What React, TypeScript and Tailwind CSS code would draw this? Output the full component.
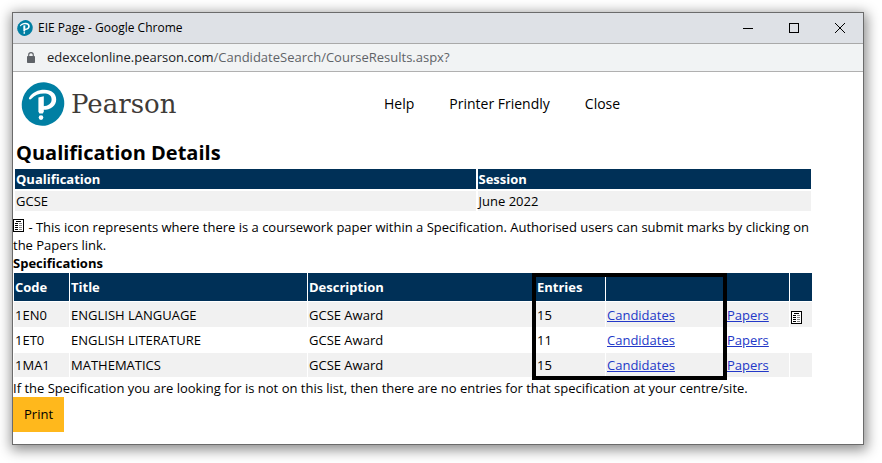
const specifications = [
  { code: '1EN0', title: 'ENGLISH LANGUAGE', description: 'GCSE Award', entries: 15, coursework: true },
  { code: '1ET0', title: 'ENGLISH LITERATURE', description: 'GCSE Award', entries: 11, coursework: false },
  { code: '1MA1', title: 'MATHEMATICS', description: 'GCSE Award', entries: 15, coursework: false }
]

const navLinks = ['Help', 'Printer Friendly', 'Close']

function PearsonMark({ className }: { className: string }) {
  return (
    <svg viewBox="0 0 44 44" className={className} aria-hidden="true">
      <ellipse cx="22" cy="22" rx="21" ry="22" transform="rotate(30 22 22)" fill="#007fa3" />
      <path
        d="M8.2 15.4C11.6 10.4 17 7.8 23.4 7.8C30.6 7.8 35.2 11.6 35.2 17.4C35.2 23.8 30 27.8 22 27.8V24.2C27.4 24 30.6 21.4 30.6 17.4C30.6 13.6 27.6 11.6 22.8 11.6C17.8 11.6 13.6 13.4 10.4 16.8C9 18.2 7.2 17 8.2 15.4Z"
        fill="#fff"
      />
      <path d="M17.4 15.4L22.8 14.2V29.6L21.8 31.6H18.4L17.4 29.6Z" fill="#fff" />
      <circle cx="20" cy="35.6" r="2.3" fill="#fff" />
    </svg>
  )
}

function CourseworkIcon({ className }: { className: string }) {
  return (
    <svg viewBox="0 0 11 13" className={`inline-block h-[13px] w-[11px] ${className}`} shapeRendering="crispEdges" aria-hidden="true">
      <rect x="0.5" y="0.5" width="10" height="12" fill="#fff" stroke="#000" />
      <path d="M3 2.5H8M2 4.5H5M2 6.5H5M2 8.5H5M2 10.5H5" stroke="#000" />
      <path d="M6 4.5H9M6 6.5H9M6 8.5H9M6 10.5H9" stroke="#888" />
    </svg>
  )
}

const windowControls = [
  { label: 'Minimise', path: 'M0 5.5H10', crisp: true },
  { label: 'Maximise', path: 'M0.5 0.5H9.5V9.5H0.5Z', crisp: true },
  { label: 'Close window', path: 'M0 0L10 10M10 0L0 10', crisp: false }
]

function TitleBar() {
  return (
    <div className="flex h-[31px] items-center border-b border-[#a9a9a9] bg-[#dee1e6] pl-1">
      <PearsonMark className="h-4 w-4" />
      <span className="ml-[5px] flex-1 text-xs">EIE Page - Google Chrome</span>
      <div className="flex">
        {windowControls.map((control) => (
          <button key={control.label} type="button" aria-label={control.label} className="flex h-[30px] w-[46px] items-center justify-center">
            <svg viewBox="0 0 10 10" className="h-2.5 w-2.5" shapeRendering={control.crisp ? 'crispEdges' : 'auto'}>
              <path d={control.path} fill="none" stroke="#000" />
            </svg>
          </button>
        ))}
      </div>
    </div>
  )
}

function AddressBar() {
  return (
    <div className="flex h-[28px] items-center border-b border-[#b0b0b0] bg-[#f1f3f4] pl-3.5">
      <svg viewBox="0 0 8 11" className="h-[11px] w-2" aria-hidden="true">
        <path d="M1.7 5V2.9a2.3 2.3 0 0 1 4.6 0V5" fill="none" stroke="#5f6368" strokeWidth="1.1" />
        <rect y="4" width="8" height="7" rx="0.8" fill="#5f6368" />
      </svg>
      <span className="ml-3 text-[13px] text-[#5f6368]">
        <span className="text-[#202124]">edexcelonline.pearson.com</span>/CandidateSearch/CourseResults.aspx?
      </span>
    </div>
  )
}

export default function App() {
  return (
    <div className="bg-white pt-3 pr-[18px] pb-[18px] pl-3 font-['Open_Sans',sans-serif] text-black">
      <div className="border border-[#6b6b6b] bg-white shadow-[1px_3px_12px_2px_rgba(0,0,0,0.45)]">
        <TitleBar />
        <AddressBar />

        <main className="pb-3 text-[13px] leading-[18px]">
          <header className="flex h-[66px] items-center pb-0.5 pl-2">
            <PearsonMark className="h-11 w-11" />
            <span className="ml-1.5 w-[313px] font-['DejaVu_Serif',serif] text-[26px] leading-8 text-[#3f3b38]">Pearson</span>
            <nav className="flex gap-[35px] text-sm">
              {navLinks.map((label) => (
                <a key={label} href="#">
                  {label}
                </a>
              ))}
            </nav>
          </header>

          <h1 className="pl-[3px] text-xl leading-[29px] font-bold">Qualification Details</h1>

          <table className="w-full max-w-[800px] table-fixed border-separate border-spacing-[2px] text-left">
            <colgroup>
              <col className="w-[58%]" />
              <col />
            </colgroup>
            <thead className="bg-[#003057] text-white">
              <tr>
                <th className="p-px">Qualification</th>
                <th className="p-px">Session</th>
              </tr>
            </thead>
            <tbody>
              <tr className="bg-[#f1f1f1]">
                <td className="p-px">GCSE</td>
                <td className="p-px">June 2022</td>
              </tr>
            </tbody>
          </table>

          <p className="max-w-[800px] pt-[5px]">
            <CourseworkIcon className="mr-px align-baseline" /> - This icon represents where there is a coursework paper
            within a Specification. Authorised users can submit marks by clicking on the Papers link.
          </p>

          <h2 className="font-bold">Specifications</h2>
          <div className="relative max-w-[800px]">
            <table className="w-full table-fixed border-separate border-spacing-px text-left">
              <colgroup>
                <col className="w-[55px]" />
                <col className="w-[237px]" />
                <col />
                <col className="w-[69px]" />
                <col className="w-[119px]" />
                <col className="w-[63px]" />
                <col className="w-[22px]" />
              </colgroup>
              <thead className="bg-[#003057] text-white">
                <tr className="h-7">
                  <th className="p-px">Code</th>
                  <th className="p-px">Title</th>
                  <th className="p-px">Description</th>
                  <th className="p-px">Entries</th>
                  <th className="p-px"></th>
                  <th className="p-px"></th>
                  <th className="p-px"></th>
                </tr>
              </thead>
              <tbody>
                {specifications.map((spec) => (
                  <tr key={spec.code} className="h-6 first:h-[25px] odd:bg-[#f1f1f1]">
                    <td className="p-px">{spec.code}</td>
                    <td className="p-px">{spec.title}</td>
                    <td className="p-px">{spec.description}</td>
                    <td className="p-px">{spec.entries}</td>
                    <td className="p-px">
                      <a href="#" className="text-[#2338c8] underline">Candidates</a>
                    </td>
                    <td className="p-px">
                      <a href="#" className="text-[#2338c8] underline">Papers</a>
                    </td>
                    <td className="p-px">{spec.coursework && <CourseworkIcon className="align-text-bottom" />}</td>
                  </tr>
                ))}
              </tbody>
            </table>
            {/* Highlight around entries and candidates */}
            <div className="pointer-events-none absolute top-px right-[86px] -bottom-0.5 w-[195px] border-4 border-black"></div>
          </div>

          <p className="pt-px">If the Specification you are looking for is not on this list, then there are no entries for that specification at your centre/site.</p>
          <button type="button" className="bg-[#ffb81c] px-[11px] py-2 leading-[19px]">Print</button>
        </main>
      </div>
    </div>
  )
}
